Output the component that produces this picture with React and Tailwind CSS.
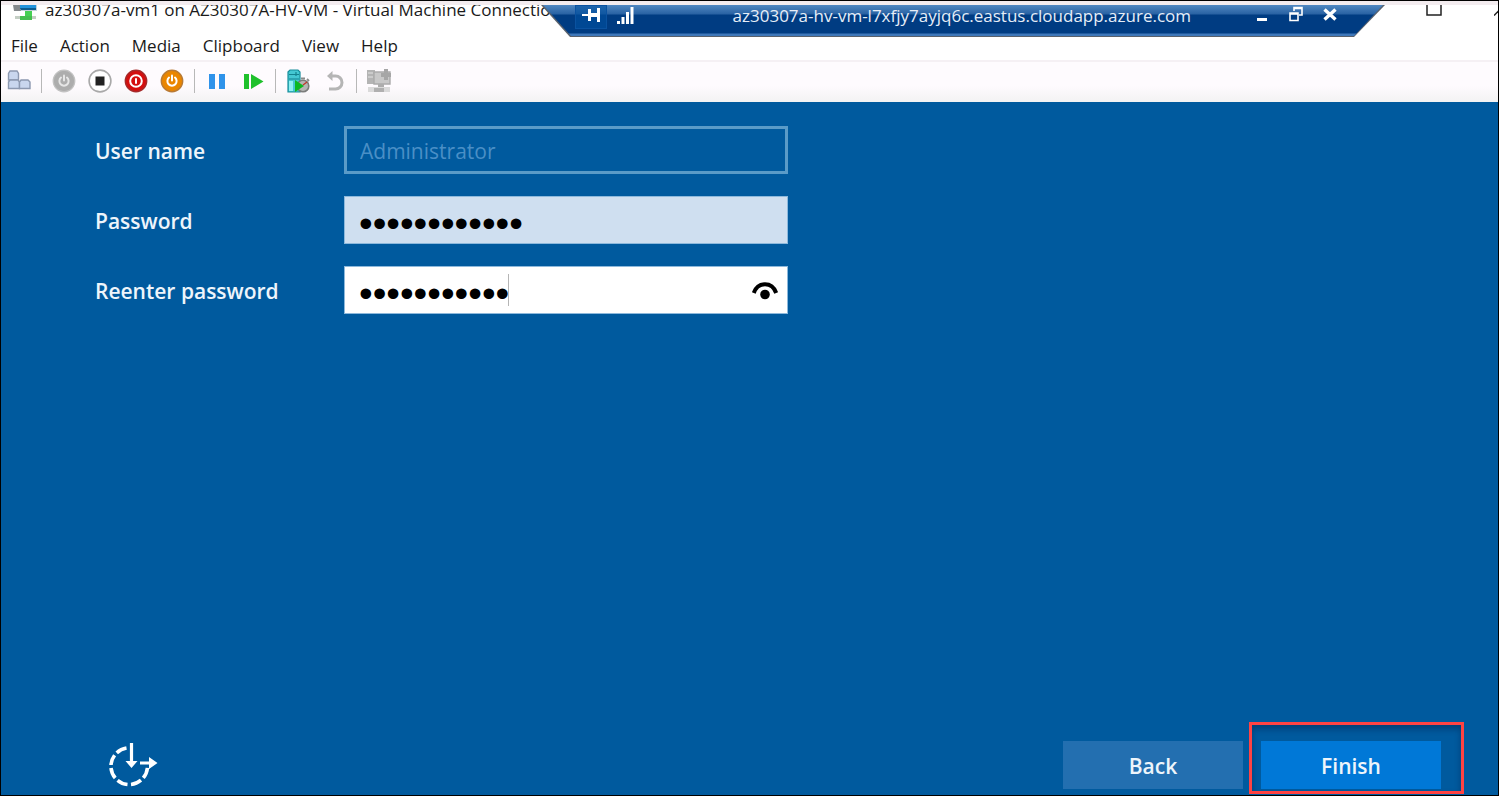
import React from "react";

const MENUS = ["File", "Action", "Media", "Clipboard", "View", "Help"];

function VmIcon() {
  return (
    <svg className="size-6 shrink-0" viewBox="0 0 24 24" aria-hidden="true">
      <path d="M0 7h9v3l-1 3H1z" fill="#85898c" />
      <path d="M6 0h18v13H8z" fill="#c3d3dc" />
      <path d="M7 1h16v10H7z" fill="#2194dd" />
      <path d="M7 10h16v2H8z" fill="#0c5c8e" />
      <path d="M12 13h7v6h-7z" fill="#46d053" />
      <path d="M2 18h21v3H2z" fill="#c4cec4" />
      <path d="M7 18h12v4H7z" fill="#45bf50" />
    </svg>
  );
}

function CadIcon() {
  return (
    <svg viewBox="0 0 24 24" className="size-6" aria-hidden="true">
      <g fill="#c9d6ee" stroke="#8c98b0" strokeWidth="1.4">
        <path d="M1.500 11V4.500l1.500-2.500h7l1.500 2.500V11z" />
        <path d="M1.500 19.500V13l1.500-2h8l1.500 2v6.500z" />
        <path d="M12.500 19.500V13l1.500-2h7l2 2v6.500z" />
      </g>
    </svg>
  );
}

function PowerGlyph() {
  return (
    <g fill="none" stroke="#fff" strokeWidth="2" strokeLinecap="round">
      <path d="M9 8.600a4.600 4.600 0 1 0 6 0" />
      <path d="M12 6.500v5" />
    </g>
  );
}

function StartIcon() {
  return (
    <svg viewBox="0 0 24 24" className="size-6" aria-hidden="true">
      <circle cx="12" cy="12" r="10.800" fill="#adadad" stroke="#c2c2c2" strokeWidth="1.200" />
      <g opacity=".7"><PowerGlyph /></g>
    </svg>
  );
}

function StopIcon() {
  return (
    <svg viewBox="0 0 24 24" className="size-6" aria-hidden="true">
      <circle cx="12" cy="12" r="10.900" fill="#fff" stroke="#a9a9a9" strokeWidth="1.600" />
      <rect x="7.500" y="7.500" width="9" height="9" fill="#222" />
    </svg>
  );
}

function ShutdownIcon() {
  return (
    <svg viewBox="0 0 24 24" className="size-6" aria-hidden="true">
      <circle cx="12" cy="12" r="10.700" fill="#d40f0f" stroke="#a52a2a" strokeWidth="1.400" />
      <circle cx="12" cy="12" r="5.800" fill="none" stroke="#fff" strokeWidth="2" />
      <path d="M12 9.300v5.400" stroke="#fff" strokeWidth="2" />
    </svg>
  );
}

function SaveIcon() {
  return (
    <svg viewBox="0 0 24 24" className="size-6" aria-hidden="true">
      <circle cx="12" cy="12" r="10.700" fill="#ea8600" stroke="#b87a35" strokeWidth="1.400" />
      <PowerGlyph />
    </svg>
  );
}

function PauseIcon() {
  return (
    <svg viewBox="0 0 24 24" className="size-6" aria-hidden="true">
      <path d="M4 5h6v15H4zM14 5h6v15h-6z" fill="#2f93ea" />
    </svg>
  );
}

function ResetIcon() {
  return (
    <svg viewBox="0 0 24 24" className="size-6" aria-hidden="true">
      <path d="M3 5h5v15H3zM10 5l12.500 7.500L10 20z" fill="#1fc12c" />
    </svg>
  );
}

function CheckpointIcon() {
  return (
    <svg viewBox="0 0 24 24" className="size-6" aria-hidden="true">
      <path d="M2 3l2-2h8l2 2v20H2z" fill="#44c7d2" stroke="#178d9a" strokeWidth="1.200" />
      <path d="M3 5.500h10M3 10h10M10 3v4" stroke="#14828f" strokeWidth="1.200" />
      <path d="M3 12h4v10H3z" fill="#8ff0f2" />
      <circle cx="17" cy="17" r="5.800" fill="#b4b6b4" stroke="#7b7d7b" strokeWidth="1.600" />
      <path d="M15 9.500h4M21 10l2 2" stroke="#8a8c8a" strokeWidth="1.800" />
      <path d="M17 16l4-3" stroke="#c0392b" strokeWidth="1.400" />
      <path d="M9 11l9 6-9 6z" fill="#0bb820" />
    </svg>
  );
}

function RevertIcon() {
  return (
    <svg viewBox="0 0 24 24" className="size-6" aria-hidden="true">
      <path d="M9 7h4.500a5.600 5.600 0 0 1 0 13H7" fill="none" stroke="#b5b5b5" strokeWidth="3" />
      <path d="M10.500 2v10L5 7z" fill="#b5b5b5" />
    </svg>
  );
}

function SessionIcon() {
  return (
    <svg viewBox="0 0 24 24" className="size-6" aria-hidden="true">
      <path d="M0 1h8v14H0z" fill="#b4b4b4" />
      <path d="M1 4h5M1 8h5" stroke="#e2e2e2" strokeWidth="1.200" />
      <path d="M7 3h16v12H7z" fill="#c8c8c8" stroke="#aaa" strokeWidth="1.400" />
      <path d="M17 0h4v4h3v4h-3v3h-4V8h-3V4h3z" fill="#a6a6a6" />
      <path d="M11 15h6v4h-6z" fill="#adadad" />
      <path d="M1 18h22v5H1z" fill="#dadada" />
      <path d="M7 19h10v4H7z" fill="#b0b0b0" />
    </svg>
  );
}

function EyeIcon() {
  return (
    <svg viewBox="0 0 26 18" className="h-[18px] w-[26px]" aria-hidden="true">
      <path d="M1.800 11C6-.600 20-.600 24.200 11" fill="none" stroke="#000" strokeWidth="4" />
      <circle cx="13" cy="12.500" r="4.800" fill="#000" />
    </svg>
  );
}

function EaseOfAccessIcon() {
  return (
    <svg viewBox="0 0 50 44" className="h-11 w-[50px]" aria-hidden="true">
      <path
        d="M18.500 5A18.500 18.500 0 0 0 3 22M3 25A18.500 18.500 0 0 0 19.500 41.500M23 41.500A18.500 18.500 0 0 0 39.500 24"
        fill="none"
        stroke="#fff"
        strokeWidth="3.600"
        strokeDasharray="11 3.200"
      />
      <path d="M23.500 0v20M32 20h11" stroke="#fff" strokeWidth="3.200" />
      <path d="M17.500 18h12l-6 7zM41 14l8.500 6-8.500 6z" fill="#fff" />
    </svg>
  );
}

const TOOL_GROUPS = [
  [["Ctrl+Alt+Delete", CadIcon]],
  [["Start", StartIcon], ["Turn off", StopIcon], ["Shut down", ShutdownIcon], ["Save", SaveIcon]],
  [["Pause", PauseIcon], ["Reset", ResetIcon]],
  [["Checkpoint", CheckpointIcon], ["Revert", RevertIcon]],
  [["Enhanced session", SessionIcon]],
];

function TitleBar() {
  return (
    <header className="flex h-6 items-end gap-2 overflow-hidden bg-white pb-[7px] pl-3">
      <VmIcon />
      <h1 className="flex-1 text-[17px] leading-6 whitespace-nowrap text-[#1a1a1a]">
        az30307a-vm1 on AZ30307A-HV-VM - Virtual Machine Connection
      </h1>
      <button type="button" aria-label="Maximize" className="mb-1.5">
        <svg viewBox="0 0 16 16" className="size-4"><path d="M1 1h14v14H1z" fill="none" stroke="#222" strokeWidth="1.500" /></svg>
      </button>
      <button type="button" aria-label="Close window" className="mb-1.5 ml-11">
        <svg viewBox="0 0 4 16" className="h-4 w-1"><path d="M0 15.500l15-15" stroke="#222" strokeWidth="1.500" /></svg>
      </button>
    </header>
  );
}

function RemoteBar() {
  return (
    <div className="absolute top-1 right-[113px] left-[540px] h-8 bg-[#59616c] [clip-path:polygon(0_0,100%_0,calc(100%-31px)_100%,29px_100%)]">
      <div className="flex h-[31px] items-center bg-[linear-gradient(#5088c2_0,#2962a3_9px,#003c82_10px,#003c82_28px,#3f78ba_29px)] pr-12 pl-[34px] text-white [clip-path:polygon(2px_0,calc(100%-2px)_0,calc(100%-31px)_100%,30px_100%)]">
        <button type="button" aria-label="Pin" className="flex h-6 w-8 items-center justify-center self-start border border-[#0a52a0] bg-[#0050a0]/60 pb-1">
          <svg viewBox="0 0 18 14" className="h-3.5 w-[18px]" aria-hidden="true">
            <path d="M0 6h6V1h3v4h6V0h3v14h-3V9H9v4H6V8H0z" fill="#fff" />
          </svg>
        </button>
        <svg viewBox="0 0 17 18" className="mb-3 ml-2.5 h-[18px] w-[17px]" aria-label="Connection quality" role="img">
          <path d="M0 15h3v3H0zM4.500 11h3v7h-3zM9 6h3v12H9zM13.500 1h3v17h-3z" fill="#fff" />
        </svg>
        <span className="mb-2.5 flex-1 pr-16 text-right text-[17px] leading-6 whitespace-nowrap text-[#e6eef8]">
          az30307a-hv-vm-l7xfjy7ayjq6c.eastus.cloudapp.azure.com
        </span>
        <div className="mb-3.5 flex items-center gap-5">
          <button type="button" aria-label="Minimize">
            <svg viewBox="0 0 14 16" className="h-4 w-3.5"><path d="M2 12h10v3H2z" fill="#fff" /></svg>
          </button>
          <button type="button" aria-label="Restore">
            <svg viewBox="0 0 14 16" className="h-4 w-3.5">
              <path d="M5 5V1.500h8V9h-3M5 2.500h8M1 7h8v7.500H1zM1 8h8" fill="none" stroke="#fff" strokeWidth="1.600" />
            </svg>
          </button>
          <button type="button" aria-label="Close">
            <svg viewBox="0 0 14 16" className="h-4 w-3.5"><path d="M1.500 3.500l11 10M12.500 3.500l-11 10" stroke="#fff" strokeWidth="3.400" /></svg>
          </button>
        </div>
      </div>
    </div>
  );
}

export default function App() {
  return (
    <div className="relative flex min-h-screen flex-col border border-black bg-[#005a9e] font-['Open_Sans','Noto_Sans',sans-serif]">
      <div className="h-1 bg-[#f3ecef]" />
      <TitleBar />
      <RemoteBar />
      <nav className="flex h-[31px] items-start gap-[22px] bg-white pt-[5px] pl-2.5 text-[17px] leading-6 text-[#1a1a1a]">
        {MENUS.map((name) => (
          <button key={name} type="button">{name}</button>
        ))}
      </nav>
      <div role="toolbar" aria-label="Virtual machine" className="flex h-[42px] items-center gap-2.5 border-t-2 border-[#f5f0f4] bg-linear-to-b from-[#fefbfe] from-60% to-[#f3f3f3] pb-0.5 pl-1.5">
        {TOOL_GROUPS.map((group, i) => (
          <React.Fragment key={i}>
            {i > 0 && <span className="h-6 w-px bg-[#b8b8b8]" />}
            <div className="flex gap-3">
              {group.map(([label, Icon]) => (
                <button key={label} type="button" aria-label={label}><Icon /></button>
              ))}
            </div>
          </React.Fragment>
        ))}
      </div>

      <form className="flex flex-1 flex-col pt-6" onSubmit={(e) => e.preventDefault()}>
        <div className="grid grid-cols-[249px_minmax(0,444px)] items-center gap-y-[22px] pl-[94px] text-[21px] font-semibold text-[#eef5fb]">
          <label htmlFor="user" className="pt-1">User name</label>
          <input
            id="user"
            type="text"
            disabled
            defaultValue="Administrator"
            className="h-12 w-full border-3 border-[#5a9bc8] bg-transparent px-[13px] pt-0.5 font-normal text-[#4a8fc6]"
          />
          <label htmlFor="password" className="pt-1">Password</label>
          <input
            id="password"
            type="password"
            defaultValue="############"
            className="h-12 w-full border border-[#8db9dc] bg-[#cfdff0] px-3.5 pt-2 font-['Liberation_Sans',sans-serif] text-[39px] font-normal text-black outline-none"
          />
          <label htmlFor="reenter" className="pt-1">Reenter password</label>
          <div className="relative">
            <input
              id="reenter"
              type="password"
              defaultValue="###########"
              className="block h-12 w-full border border-[#8db9dc] bg-white px-3.5 pt-2 font-['Liberation_Sans',sans-serif] text-[39px] font-normal text-black outline-none"
            />
            <span className="absolute top-2 left-[164px] h-8 w-px bg-[#b5b5b5]" />
            <button type="button" aria-label="Show password" className="absolute top-4 right-2.5">
              <EyeIcon />
            </button>
          </div>
        </div>

        <div className="mt-auto flex items-end justify-between pr-[34px] pl-[107px] text-[21px] font-semibold text-[#eef5fb]">
          <button type="button" aria-label="Ease of access" className="mb-2">
            <EaseOfAccessIcon />
          </button>
          <div className="flex items-end gap-1.5">
            <button type="button" className="mb-1.5 h-12 w-[180px] bg-[#236fb0] pt-1">Back</button>
            <div className="mb-px border-3 border-[#ff4343] pt-4 pr-5 pb-0.5 pl-[9px] shadow-[inset_0_4px_6px_rgba(0,30,70,0.45)]">
              <button type="submit" className="block h-12 w-[180px] bg-[#0078d7] pt-1">Finish</button>
            </div>
          </div>
        </div>
      </form>
    </div>
  );
}
